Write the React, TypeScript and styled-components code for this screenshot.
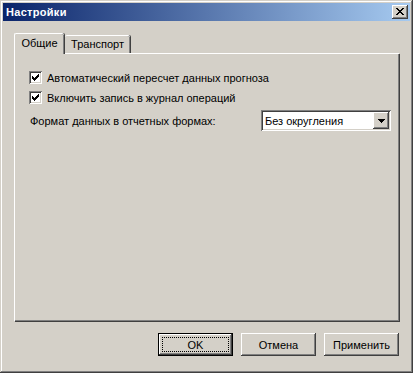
import React from "react";
import styled, { createGlobalStyle } from "styled-components";

const Global = createGlobalStyle`
  html, body { margin: 0; padding: 0; background: #d4d0c8; }
  body { font-family: Tahoma, "Liberation Sans", Arial, sans-serif; font-size: 11px; color: #000; }
`;

const Window = styled.div`
  box-sizing: border-box;
  width: 413px;
  height: 373px;
  padding: 3px;
  background: #d4d0c8;
  box-shadow: inset -1px -1px #404040, inset 1px 1px #d4d0c8, inset -2px -2px #808080, inset 2px 2px #ffffff;
  display: flex;
  flex-direction: column;
`;

const TitleBar = styled.div`
  height: 18px;
  display: flex;
  align-items: center;
  justify-content: space-between;
  padding: 0 2px 0 3px;
  background: linear-gradient(to right, #0a246a, #a6caf0);
`;

const TitleText = styled.span`
  color: #fff;
  font-weight: bold;
  font-size: 11px;
  letter-spacing: 0.3px;
`;

const Raised = styled.div`
  box-sizing: border-box;
  background: #d4d0c8;
  box-shadow: inset -1px -1px #404040, inset 1px 1px #ffffff, inset -2px -2px #808080, inset 2px 2px #d4d0c8;
`;

const CloseButton = styled(Raised)`
  width: 16px;
  height: 14px;
  display: flex;
  align-items: center;
  justify-content: center;
  padding: 0 1px 1px 0;
`;

const Body = styled.div`
  flex: 1;
  display: flex;
  flex-direction: column;
  padding: 12px 11px 0 11px;
`;

const TabStrip = styled.div`
  display: flex;
  align-items: flex-end;
  height: 20px;
  position: relative;
  z-index: 1;
`;

const Tab = styled.div<{ $active?: boolean; $w: number }>`
  box-sizing: border-box;
  width: ${(p) => p.$w}px;
  height: ${(p) => (p.$active ? 21 : 18)}px;
  margin-bottom: ${(p) => (p.$active ? -1 : 0)}px;
  background: #d4d0c8;
  border-top: 1px solid #fff;
  border-left: ${(p) => (p.$active ? "1px solid #fff" : "none")};
  border-top-left-radius: 2px;
  border-top-right-radius: 2px;
  box-shadow: inset -1px 0 #808080, 1px 0 #404040;
  display: flex;
  align-items: flex-start;
  justify-content: center;
  padding-top: ${(p) => (p.$active ? 3 : 2)}px;
  margin-right: 1px;
`;

const Panel = styled.div`
  box-sizing: border-box;
  height: 268px;
  width: 385px;
  border-top: 1px solid #fff;
  border-left: 1px solid #fff;
  box-shadow: inset -1px -1px #808080, 1px 1px #404040;
  margin-right: 1px;
  padding: 17px 8px 0 14px;
  display: flex;
  flex-direction: column;
`;

const CheckRow = styled.label`
  display: flex;
  align-items: center;
  height: 13px;
  margin-bottom: 7px;
  gap: 5px;
`;

const Sunken = styled.div`
  box-sizing: border-box;
  background: #fff;
  box-shadow: inset 1px 1px #808080, inset -1px -1px #ffffff, inset 2px 2px #404040, inset -2px -2px #d4d0c8;
`;

const CheckBox = styled(Sunken)`
  width: 13px;
  height: 13px;
  padding: 2px;
  display: flex;
  flex-shrink: 0;
`;

const FormatRow = styled.div`
  display: flex;
  align-items: center;
  justify-content: space-between;
  margin-top: -1px;
  padding-left: 1px;
`;

const Combo = styled(Sunken)`
  width: 130px;
  height: 21px;
  padding: 2px;
  display: flex;
  align-items: center;
`;

const ComboText = styled.span`
  flex: 1;
  padding-left: 2px;
`;

const DropButton = styled(Raised)`
  width: 16px;
  height: 17px;
  display: flex;
  align-items: center;
  justify-content: center;
`;

const Footer = styled.div`
  display: flex;
  justify-content: flex-end;
  gap: 8px;
  margin-top: 12px;
  padding-right: 0px;
`;

const Button = styled(Raised)<{ $default?: boolean }>`
  width: 75px;
  height: 23px;
  display: flex;
  align-items: center;
  justify-content: center;
  position: relative;
  ${(p) =>
    p.$default
      ? `box-shadow: inset 0 0 0 1px #000, inset -2px -2px #404040, inset 2px 2px #ffffff, inset -3px -3px #808080;`
      : ""}
`;

const FocusRing = styled.span`
  position: absolute;
  inset: 4px;
  border: 1px dotted #000;
`;

const CheckMark = () => {
  const cols: [number, number][] = [
    [0, 2], [1, 3], [2, 4], [3, 3], [4, 2], [5, 1], [6, 0],
  ];
  return (
    <svg width="9" height="9" viewBox="0 0 9 9" shapeRendering="crispEdges">
      {cols.map(([x, y]) => (
        <rect key={x} x={x + 1} y={y + 1} width="1" height="3" fill="#000" />
      ))}
    </svg>
  );
};

const CloseGlyph = () => {
  const rows = ["##....##", ".##..##.", "..####..", "...##...", "..####..", ".##..##.", "##....##"];
  return (
    <svg width="8" height="7" viewBox="0 0 8 7" shapeRendering="crispEdges">
      {rows.flatMap((r, y) =>
        r.split("").map((c, x) => (c === "#" ? <rect key={`${x}-${y}`} x={x} y={y} width="1" height="1" fill="#000" /> : null))
      )}
    </svg>
  );
};

const Arrow = () => (
  <svg width="7" height="4" viewBox="0 0 7 4" shapeRendering="crispEdges">
    <rect x="0" y="0" width="7" height="1" fill="#000" />
    <rect x="1" y="1" width="5" height="1" fill="#000" />
    <rect x="2" y="2" width="3" height="1" fill="#000" />
    <rect x="3" y="3" width="1" height="1" fill="#000" />
  </svg>
);

export default function App() {
  return (
    <>
      <Global />
      <Window>
        <TitleBar>
          <TitleText>Настройки</TitleText>
          <CloseButton>
            <CloseGlyph />
          </CloseButton>
        </TitleBar>
        <Body>
          <TabStrip>
            <Tab $active $w={50}>Общие</Tab>
            <Tab $w={65}>Транспорт</Tab>
          </TabStrip>
          <Panel>
            <CheckRow>
              <CheckBox><CheckMark /></CheckBox>
              Автоматический пересчет данных прогноза
            </CheckRow>
            <CheckRow>
              <CheckBox><CheckMark /></CheckBox>
              Включить запись в журнал операций
            </CheckRow>
            <FormatRow>
              <span>Формат данных в отчетных формах:</span>
              <Combo>
                <ComboText>Без округления</ComboText>
                <DropButton><Arrow /></DropButton>
              </Combo>
            </FormatRow>
          </Panel>
          <Footer>
            <Button $default>OK<FocusRing /></Button>
            <Button>Отмена</Button>
            <Button>Применить</Button>
          </Footer>
        </Body>
      </Window>
    </>
  );
}
